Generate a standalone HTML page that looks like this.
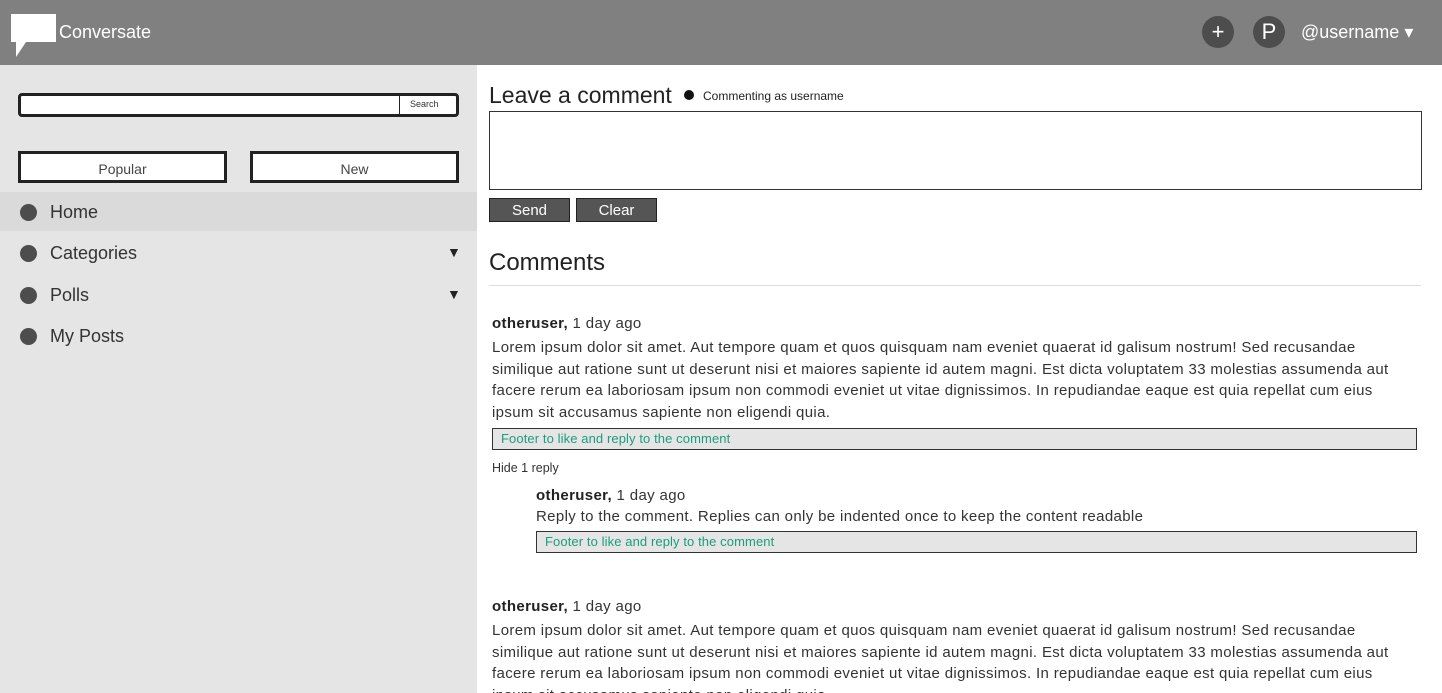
<!DOCTYPE html>
<html><head><style>
*{margin:0;padding:0;box-sizing:border-box}
html,body{width:1442px;height:693px;overflow:hidden}
body{font-family:"Liberation Sans","DejaVu Sans",sans-serif;color:#333;background:#fff;position:relative}
.top{position:absolute;left:0;top:0;width:1442px;height:65px;background:#808080}
.abs{position:absolute;white-space:nowrap}
.side{position:absolute;left:0;top:65px;width:477px;height:628px;background:#e5e5e5}
.circ{position:absolute;width:32px;height:32px;border-radius:50%;background:#4d4d4d;color:#fff;text-align:center;line-height:32px;font-size:22px}
.btn{position:absolute;height:32px;border:3px solid #222;background:#fff;text-align:center;font-size:14px;line-height:30px;color:#444}
.nav{position:absolute;left:0;width:477px;height:41px}
.nav .d{position:absolute;left:20px;top:12px;width:17px;height:17px;border-radius:50%;background:#4d4d4d}
.nav .t{position:absolute;left:50px;top:10px;font-size:18px;color:#333}
.nav .a{position:absolute;left:447px;top:11px;font-size:14px;color:#222}
.dk{position:absolute;top:198px;height:24px;background:#555;border:1px solid #222;color:#fff;font-size:15px;text-align:center;line-height:24px}
.p{font-size:15px;letter-spacing:0.35px;line-height:21.5px;color:#333}
.foot{position:absolute;height:22px;background:#e5e5e5;border:1px solid #333;color:#1a9e7a;font-size:13px;letter-spacing:0.1px;line-height:20px;padding-left:8px}
</style></head><body>
<div class="top"></div>
<svg class="abs" style="left:11px;top:14px" width="46" height="44"><path d="M0 0H45V28H15L5 43V28H0Z" fill="#fff"/></svg>
<div class="abs" style="left:59px;top:22px;font-size:18px;color:#fff">Conversate</div>
<div class="circ" style="left:1202px;top:16px">+</div>
<div class="circ" style="left:1253px;top:16px">P</div>
<div class="abs" style="left:1301px;top:22px;font-size:18px;color:#fff">@username ▾</div>

<div class="side"></div>
<div class="abs" style="left:18px;top:93px;width:441px;height:24px;border:3px solid #222;border-radius:4px;background:#fff"></div>
<div class="abs" style="left:399px;top:95px;width:1px;height:20px;background:#222"></div>
<div class="abs" style="left:410px;top:99px;font-size:9px;color:#333">Search</div>
<div class="btn" style="left:18px;top:151px;width:209px">Popular</div>
<div class="btn" style="left:250px;top:151px;width:209px">New</div>
<div class="nav" style="top:192px;background:#dadada;height:39px"><div class="d"></div><div class="t">Home</div></div>
<div class="nav" style="top:233px"><div class="d"></div><div class="t">Categories</div><div class="a">▼</div></div>
<div class="nav" style="top:275px"><div class="d"></div><div class="t">Polls</div><div class="a">▼</div></div>
<div class="nav" style="top:316px"><div class="d"></div><div class="t">My Posts</div></div>

<div class="abs" style="left:489px;top:82px;font-size:23px;color:#222">Leave a comment</div>
<div class="abs" style="left:684px;top:90px;width:10px;height:10px;border-radius:50%;background:#111"></div>
<div class="abs" style="left:703px;top:89px;font-size:12px;color:#222">Commenting as username</div>
<div class="abs" style="left:489px;top:111px;width:933px;height:79px;border:1px solid #333"></div>
<div class="dk" style="left:489px;width:81px">Send</div>
<div class="dk" style="left:576px;width:81px">Clear</div>
<div class="abs" style="left:489px;top:249px;font-size:24px;color:#222">Comments</div>
<div class="abs" style="left:489px;top:285px;width:932px;height:1px;background:#ddd"></div>

<div class="abs p" style="left:492px;top:313px"><b style="color:#222">otheruser,</b> 1 day ago</div>
<div class="abs p" style="left:492px;top:337px">Lorem ipsum dolor sit amet. Aut tempore quam et quos quisquam nam eveniet quaerat id galisum nostrum! Sed recusandae<br>similique aut ratione sunt ut deserunt nisi et maiores sapiente id autem magni. Est dicta voluptatem 33 molestias assumenda aut<br>facere rerum ea laboriosam ipsum non commodi eveniet ut vitae dignissimos. In repudiandae eaque est quia repellat cum eius<br>ipsum sit accusamus sapiente non eligendi quia.</div>
<div class="foot" style="left:492px;top:428px;width:925px">Footer to like and reply to the comment</div>
<div class="abs" style="left:492px;top:461px;font-size:12.5px;color:#333">Hide 1 reply</div>
<div class="abs p" style="left:536px;top:485px"><b style="color:#222">otheruser,</b> 1 day ago</div>
<div class="abs p" style="left:536px;top:506px">Reply to the comment. Replies can only be indented once to keep the content readable</div>
<div class="foot" style="left:536px;top:531px;width:881px">Footer to like and reply to the comment</div>

<div class="abs p" style="left:492px;top:596px"><b style="color:#222">otheruser,</b> 1 day ago</div>
<div class="abs p" style="left:492px;top:620px">Lorem ipsum dolor sit amet. Aut tempore quam et quos quisquam nam eveniet quaerat id galisum nostrum! Sed recusandae<br>similique aut ratione sunt ut deserunt nisi et maiores sapiente id autem magni. Est dicta voluptatem 33 molestias assumenda aut<br>facere rerum ea laboriosam ipsum non commodi eveniet ut vitae dignissimos. In repudiandae eaque est quia repellat cum eius<br>ipsum sit accusamus sapiente non eligendi quia.</div>
</body></html>
